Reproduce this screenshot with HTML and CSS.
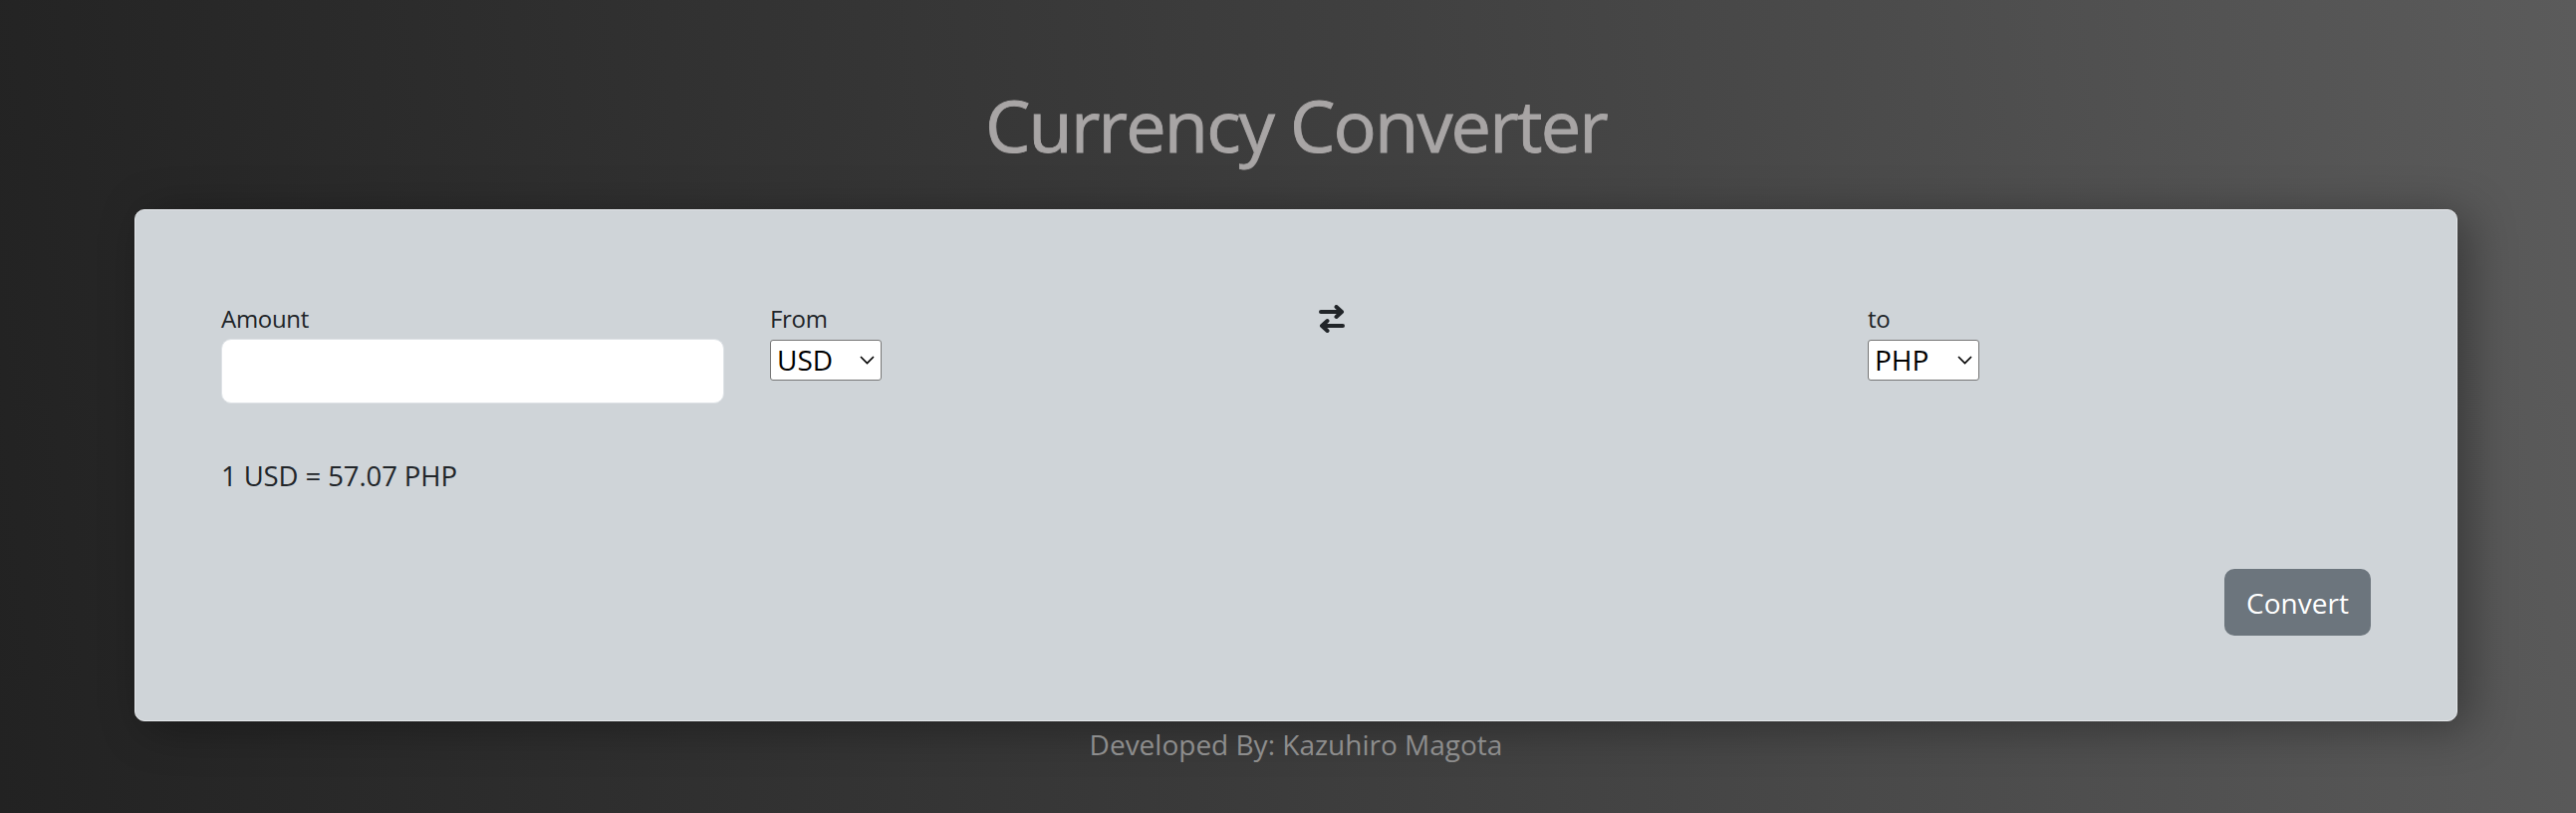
FILE: index.html
```html
<!DOCTYPE html>
<html lang="en">
<head>
<meta charset="utf-8">
<title>Currency Converter</title>
<link rel="stylesheet" href="styles.css">
</head>
<body>
<div class="page">
  <h1 class="title">Currency Converter</h1>
  <main class="card">
    <div class="fields">
      <div class="field">
        <label class="label" for="amount">Amount</label>
        <input class="amount" id="amount" type="text">
      </div>
      <div class="field">
        <label class="label" for="from">From</label>
        <span class="select-wrap">
          <select class="currency" id="from"><option>USD</option><option>PHP</option><option>EUR</option></select>
          <svg class="chevron" width="15" height="9" viewBox="0 0 15 9" fill="none" stroke="#000" stroke-width="1.6"><path d="M1 1L7.5 7.5L14 1"/></svg>
        </span>
      </div>
      <div class="field">
        <svg class="swap" width="26" height="28" viewBox="0 0 26 28" fill="none" stroke="#212529" stroke-width="4" stroke-linecap="round" stroke-linejoin="round">
          <path d="M2 7H23M17.5 2L23 7L17.5 12"/>
          <path d="M24 21H3M8.5 16L3 21L8.5 26"/>
        </svg>
      </div>
      <div class="field">
        <label class="label" for="to">to</label>
        <span class="select-wrap">
          <select class="currency" id="to"><option>PHP</option><option>USD</option><option>EUR</option></select>
          <svg class="chevron" width="15" height="9" viewBox="0 0 15 9" fill="none" stroke="#000" stroke-width="1.6"><path d="M1 1L7.5 7.5L14 1"/></svg>
        </span>
      </div>
    </div>
    <p class="rate">1 USD = 57.07 PHP</p>
    <div class="actions">
      <button class="convert" type="button">Convert</button>
    </div>
  </main>
  <footer class="footer">Developed By: Kazuhiro Magota</footer>
</div>
</body>
</html>
```
FILE: styles.css
```css
html, body {
  margin: 0;
  padding: 0;
  height: 100%;
}
body {
  background: linear-gradient(84deg, #222222 0%, #3a3a3a 45%, #5b5b5b 100%);
  font-family: "Open Sans", "Noto Sans", sans-serif;
  color: #212529;
  overflow: hidden;
}
.page {
  width: 2332px;
  margin-left: 135px;
  display: flex;
  flex-direction: column;
  align-items: stretch;
}
.title {
  margin: 84px 0 44px;
  font-size: 72px;
  line-height: 82px;
  font-weight: 500;
  letter-spacing: -1.8px;
  text-align: center;
  color: #a8a5a5;
  -webkit-text-stroke: 0.9px #a8a5a5;
}
.card {
  box-sizing: border-box;
  height: 514px;
  background: #cfd4d8;
  border: 1px solid #e4e7ea;
  border-radius: 10px;
  padding: 91px 86px 85px 86px;
  box-shadow: 12px 6px 45px rgba(0, 0, 0, 0.35);
  display: flex;
  flex-direction: column;
}
.fields {
  display: grid;
  grid-template-columns: repeat(4, 1fr);
  column-gap: 46px;
  align-items: start;
}
.field {
  display: flex;
  flex-direction: column;
  align-items: flex-start;
}
.label {
  font-size: 24px;
  line-height: 36px;
  margin-bottom: 2px;
  letter-spacing: -0.3px;
}
.amount {
  box-sizing: border-box;
  width: 100%;
  height: 65px;
  border: 1px solid #dee2e6;
  border-radius: 10px;
  background: #fff;
  font-family: inherit;
  font-size: 24px;
  padding: 0 16px;
  outline: none;
}
.select-wrap {
  position: relative;
  display: block;
  margin-top: 1px;
}
.currency {
  display: block;
  box-sizing: border-box;
  width: 112px;
  height: 41px;
  -webkit-appearance: none;
  appearance: none;
  font-family: "Open Sans", sans-serif;
  font-size: 28px;
  line-height: 39px;
  color: #000;
  background: #fff;
  border: 1px solid #767676;
  border-radius: 3px;
  padding: 0 0 0 6px;
  margin: 0;
}
.chevron {
  position: absolute;
  right: 7px;
  top: 16px;
  pointer-events: none;
}
.swap {
  display: block;
  margin-top: 4px;
}
.rate {
  margin: 52px 0 0;
  font-size: 27.5px;
  line-height: 42px;
  letter-spacing: -0.1px;
}
.actions {
  margin-top: auto;
  display: flex;
  justify-content: flex-end;
}
.convert {
  box-sizing: border-box;
  width: 147px;
  height: 67px;
  border: none;
  border-radius: 10px;
  background: #6c757d;
  color: #fff;
  font-family: inherit;
  font-size: 28px;
  padding: 0;
}
.footer {
  margin-top: 2px;
  text-align: center;
  font-size: 28px;
  line-height: 42px;
  color: #8d8d8d;
}
```
